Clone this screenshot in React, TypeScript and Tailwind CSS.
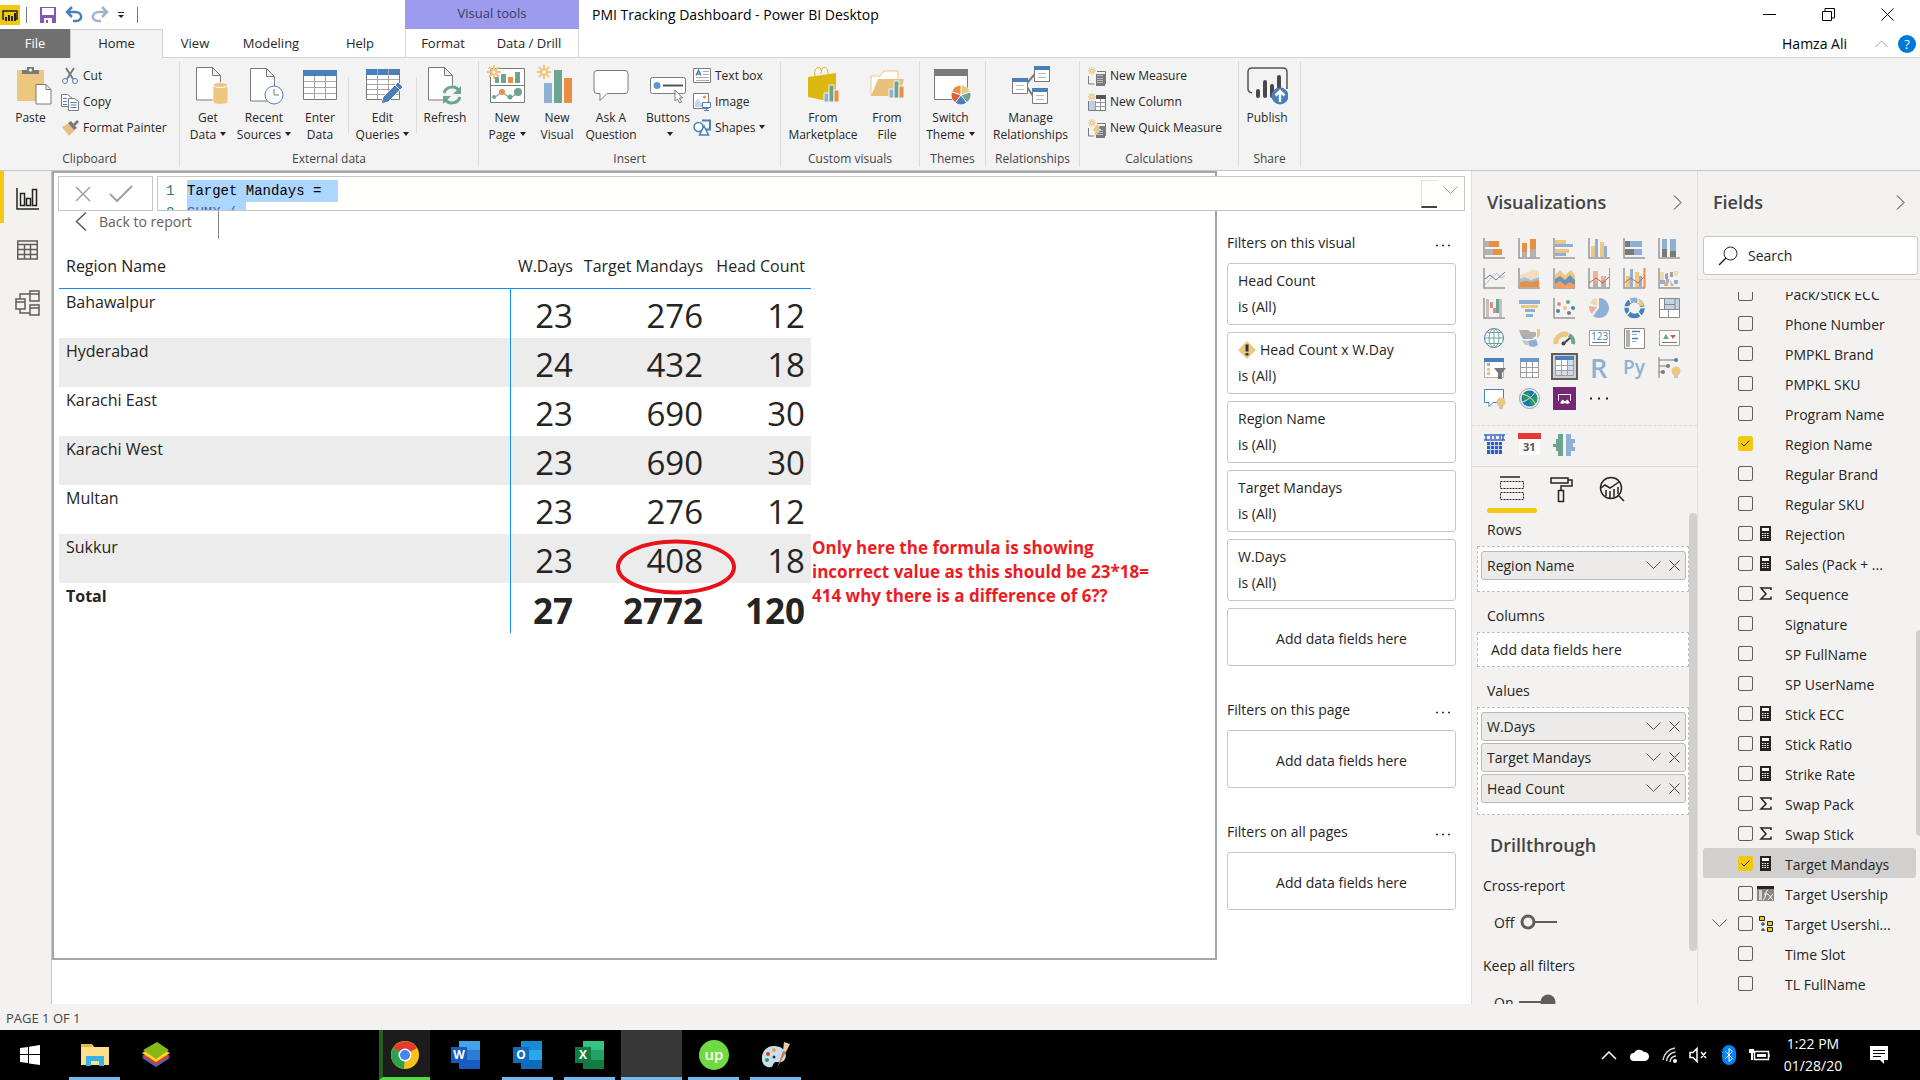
import { useState, type ReactNode } from 'react';

const GRAY = '#7a7a7a';
const BLUE = '#4a80ba';
const LIGHT = '#8eb0d5';
const GREEN = '#6ba491';
const ORANGE = '#e88e45';
const TAN = '#edc67f';

interface SvgProps {
  w: number;
  h: number;
  children: ReactNode;
}

function Svg({ w, h, children }: SvgProps) {
  return (
    <svg width={w} height={h} viewBox={`0 0 ${w} ${h}`} fill="none" className="shrink-0" aria-hidden="true">
      {children}
    </svg>
  );
}

/* ---------- Ribbon icons (42x42) ---------- */

function Spark({ x = 0, s = 1 }: { x?: number; s?: number }) {
  return (
    <g transform={`translate(${x} 0) scale(${s})`} stroke={TAN} strokeWidth="2">
      <path d="M7 0v4M7 10v4M0 7h4M10 7h4M2 2l3 3M9 9l3 3M12 2L9 5M5 9l-3 3" />
      <circle cx="7" cy="7" r="2.5" fill="#fff" />
    </g>
  );
}

const bigIcons: Record<string, ReactNode> = {
  paste: (
    <>
      <path d="M7 5h27v31H7z" fill={TAN} />
      <path d="M12 9V5h5V2h7v3h5v4z" fill={GRAY} />
      <circle cx="20.5" cy="5" r="1.5" fill="#fff" />
      <path d="M26 19.5h10l5 5V39H26zM36 19.5v5h5" fill="#fff" stroke={GRAY} />
    </>
  ),
  getData: (
    <>
      <path d="M9.5 2.5h16l8 8V35h-24zM25.5 2.5v8h8" fill="#fff" stroke={GRAY} />
      <path d="M26 20h15v17c0 3-15 3-15 0z" fill={TAN} stroke="#f3f3f3" />
      <ellipse cx="33.5" cy="20" rx="7.5" ry="2.5" fill={TAN} stroke="#fff" />
    </>
  ),
  recent: (
    <>
      <path d="M7.5 3.5h16l8 8V36h-24zM23.5 3.5v8h8" fill="#fff" stroke={GRAY} />
      <circle cx="31" cy="30" r="9" fill="#fff" stroke={BLUE} />
      <path d="M31 24v6h5" stroke={GRAY} />
    </>
  ),
  enter: (
    <>
      <path d="M4.5 5.5h33v29h-33z" fill="#fff" stroke={GRAY} />
      <path d="M4 5h34v6H4z" fill={BLUE} />
      <path d="M15.5 11v23M26.5 11v23M5 16.5h32M5 22.5h32M5 28.5h32" stroke="#a8a8a8" />
    </>
  ),
  edit: (
    <>
      <path d="M4.5 4.5h33v30h-33z" fill="#fff" stroke={GRAY} />
      <path d="M4 4h34v6H4z" fill={BLUE} />
      <path d="M15.5 4v30M26.5 4v30M5 14.5h32M5 19.5h32M5 24.5h32M5 29.5h32" stroke="#a8a8a8" />
      <path d="M19 39l2-7 15-15 5 5-15 15z" fill={BLUE} stroke="#f3f3f3" />
      <path d="M33 20l5 5" stroke="#fff" />
    </>
  ),
  refresh: (
    <>
      <path d="M4.5 2.5h16l8 8V35h-24zM20.5 2.5v8h8" fill="#fff" stroke={GRAY} />
      <circle cx="28" cy="30" r="10" fill="#f3f3f3" />
      <path d="M20 28c2-7 12-8 15-2M36 32c-2 7-12 8-15 2" stroke={GREEN} strokeWidth="3" />
      <path d="M37 21v8h-8zM19 39v-8h8z" fill={GREEN} />
    </>
  ),
  newPage: (
    <>
      <path d="M4.5 3.5h34v34h-34zM5 20.5h33" fill="#fff" stroke={GRAY} />
      <path d="M9 12h4v6H9zM15 9h5v9h-5zM29 7h5v11h-5z" fill={GREEN} />
      <path d="M22 12h5v6h-5z" fill={ORANGE} />
      <path d="M8 33l8-6 8 6 8-5" stroke={GRAY} />
      <circle cx="8" cy="32" r="2" fill={GREEN} />
      <circle cx="16" cy="27" r="3" fill={ORANGE} />
      <circle cx="24" cy="32" r="2.5" fill={GREEN} />
      <circle cx="32" cy="27" r="4" fill={GREEN} />
      <Spark x={1} />
    </>
  ),
  newVisual: (
    <>
      <path d="M8 18h8v20H8z" fill={LIGHT} />
      <path d="M18 5h8v33h-8z" fill={GREEN} />
      <path d="M28 13h8v25h-8z" fill={ORANGE} />
      <Spark x={1} />
    </>
  ),
  ask: <path d="M7 5.5h28q3 0 3 3v17q0 3-3 3H17l-7 7v-7H7q-3 0-3-3v-17q0-3 3-3z" fill="#fff" stroke={GRAY} />,
  buttons: (
    <>
      <rect x="3.5" y="12.5" width="35" height="16" rx="2" fill="#fff" stroke={GRAY} />
      <circle cx="10" cy="20.5" r="3.5" fill="#5b9bd5" />
      <path d="M16 20.5h20" stroke="#555" strokeWidth="2" />
      <path d="M28 25v11l2.500-2 2 4 2-1-2-4h3z" fill="#fff" stroke={GRAY} />
    </>
  ),
  market: (
    <>
      <path d="M13 11c-2-10 6-10 6-6M19 9c0-9 7-9 7 0" stroke="#dcb811" />
      <path d="M6 12l28-4v26l-9 2-19-4z" fill="#dcb811" />
      <path d="M22 28h5v9h-5z" fill={LIGHT} stroke="#f3f3f3" />
      <path d="M27 20h5v17h-5z" fill={GREEN} stroke="#f3f3f3" />
      <path d="M32 25h5v12h-5z" fill={ORANGE} stroke="#f3f3f3" />
    </>
  ),
  fromFile: (
    <>
      <path d="M5 30V11h9l4-5h14v25z" fill="#fff" stroke={TAN} />
      <path d="M12 14h26l-5 17H5z" fill="#e9c07c" />
      <path d="M23 24h5v9h-5z" fill={LIGHT} stroke="#f3f3f3" />
      <path d="M28 16h5v17h-5z" fill={GREEN} stroke="#f3f3f3" />
      <path d="M33 21h5v12h-5z" fill={ORANGE} stroke="#f3f3f3" />
    </>
  ),
  theme: (
    <>
      <path d="M4.5 4.5h33v30h-33z" fill="#fff" stroke={GRAY} />
      <path d="M4 4h34v7H4z" fill={GRAY} />
      <circle cx="31" cy="30" r="10" fill="#fff" />
      <path d="M31 30V20.5a9.5 9.5 0 0 1 9 6.500z" fill={TAN} />
      <path d="M31 30l9-3a9.5 9.5 0 0 1-3.500 10.500z" fill={GREEN} />
      <path d="M31 30l5.500 7.500a9.5 9.5 0 0 1-11 0z" fill={BLUE} />
      <path d="M31 30l-5.500 7.500A9.5 9.5 0 0 1 22 27z" fill="#d9603f" />
      <path d="M31 30l-9-3a9.5 9.5 0 0 1 9-6.500z" fill={ORANGE} />
      <path d="M31 30V20M31 30l9-3M31 30l6 8M31 30l-6 8M31 30l-9-3" stroke="#fff" />
    </>
  ),
  manage: (
    <>
      <path d="M17 18L25 9M17 22l6 9" stroke={GRAY} strokeWidth="2" />
      <path d="M2.5 15.5h15v13h-15zM24.5 3.5h15v13h-15zM22.5 25.5h15v13h-15z" fill="#fff" stroke={GRAY} />
      <path d="M2 13h16v4H2zM24 1h16v4H24zM22 23h16v4H22z" fill={BLUE} />
      <path d="M6 20.5h8M6 24.5h8M28 8.5h8M28 12.5h8M26 30.5h8M26 34.5h8" stroke="#bbb" />
    </>
  ),
  publish: (
    <>
      <path d="M6 28q-4-1-4-4V7q0-4 4-4h31q4 0 4 4v17" fill="#f3f3f3" stroke="#555" strokeWidth="1.5" />
      <path d="M12 26v5M19 17v14M26 21v10M33 12v14" stroke="#484848" strokeWidth="4" strokeLinecap="round" />
      <circle cx="34" cy="31" r="8.5" fill={BLUE} />
      <path d="M34 37V26M29.5 30.5L34 26l4.500 4.500" stroke="#fff" strokeWidth="2.5" />
    </>
  ),
};

/* ---------- Ribbon icons (18x19) ---------- */

const smallIcons: Record<string, ReactNode> = {
  cut: (
    <>
      <path d="M5 1l7 11M13 1L6 12" stroke={GRAY} strokeWidth="2" />
      <circle cx="4" cy="14" r="2.5" stroke={BLUE} />
      <circle cx="14" cy="14" r="2.5" stroke={BLUE} />
    </>
  ),
  copy: (
    <>
      <path d="M.5 1.5h6l4 3v9H.5z" fill="#fff" stroke={GRAY} />
      <path d="M7.5 5.5h6l4 3v9h-10z" fill="#fff" stroke={GRAY} />
      <path d="M2 5.5h4M2 8.5h4M2 11.5h4M9.5 9.5h6M9.5 12h6M9.5 14.5h6" stroke={BLUE} />
    </>
  ),
  painter: (
    <>
      <path d="M1 8l7-4 6 7-6 6z" fill="#e9bd83" />
      <path d="M7 4l3-2 6 7-3 2z" fill={GRAY} />
      <path d="M12 5l4-4 2 2-4 4z" fill={GRAY} />
    </>
  ),
  textBox: (
    <>
      <path d="M.5 1.5h17v14H.5z" fill="#fff" stroke={GRAY} />
      <path d="M3 8.5l2.500-5 2.500 5M4 7h3" stroke={BLUE} strokeWidth="1.5" />
      <path d="M10 4.5h6M10 7.5h6M3 10.5h13M3 13.5h13" stroke="#aaa" />
    </>
  ),
  image: (
    <>
      <path d="M.5 .5h15v15H.5z" fill="#fff" stroke={GRAY} />
      <path d="M2 14V9l3-3 4 5v3z" fill="#c3d5e9" />
      <circle cx="11.5" cy="4" r="1.5" fill={ORANGE} />
      <path d="M9.5 9.5h8v5h-8zM13.5 14v3M11 17.5h5" fill="#fff" stroke={BLUE} />
    </>
  ),
  shapes: (
    <>
      <path d="M9 1.5h8v9h-6" stroke={BLUE} strokeWidth="2" />
      <circle cx="5.5" cy="8" r="4.5" fill="#fff" stroke={BLUE} strokeWidth="1.5" />
      <path d="M11 7l4.500 9h-9z" fill="#fff" stroke={BLUE} strokeWidth="1.5" />
    </>
  ),
  measure: (
    <>
      <path d="M.5 9v8h6M9 4.5h8.500V17" stroke={GRAY} />
      <path d="M8 7h9v12H8z" fill={GRAY} />
      <path d="M9.5 8.5h6M9.5 11.5h6M9.5 13.5h6M9.5 15.5h6" stroke="#fff" strokeDasharray="1 1" />
      <Spark s={0.55} />
    </>
  ),
  column: (
    <>
      <path d="M.5 2.5h17v15H.5z" fill="#fff" stroke={GRAY} />
      <path d="M8 2h10v4H8z" fill="#555" />
      <path d="M1 8h6v9H1z" fill="#bcd0e8" />
      <path d="M7.5 6v11M12.5 6v11M7 9.5h10M7 13.5h10" stroke="#999" />
      <path d="M0 0h8v8H0z" fill="#f3f3f3" />
      <Spark s={0.55} />
    </>
  ),
  quick: (
    <>
      <path d="M.5 9v8h6M9 4.5h8.500V17" stroke={GRAY} />
      <path d="M8 7h9v12H8z" fill={GRAY} />
      <path d="M9.5 11.5h6M9.5 13.5h6M9.5 15.5h6" stroke="#fff" strokeDasharray="1 1" />
      <path d="M8 6h4l-2 4h3l-7 8 1-6H4z" fill={TAN} stroke="#f3f3f3" strokeWidth=".5" />
      <Spark s={0.55} />
    </>
  ),
};

/* ---------- Visualization gallery icons (23x23) ---------- */

const axis = <path d="M1 1v20h21" stroke="#9a9896" strokeWidth="1.5" />;

const vizIcons: { name: string; icon: ReactNode; selected?: boolean }[] = [
  { name: 'Stacked bar chart', icon: <>{axis}<path d="M2 4h4v6H2zM2 12h8v6H2z" fill="#b3b0ad" /><path d="M6 4h10v6H6zM10 12h9v6h-9z" fill={ORANGE} /></> },
  { name: 'Stacked column chart', icon: <>{axis}<path d="M4 15h5v5H4zM12 12h6v8h-6z" fill="#b3b0ad" /><path d="M4 6h5v9H4zM12 2h6v10h-6z" fill={ORANGE} /></> },
  { name: 'Clustered bar chart', icon: <>{axis}<path d="M2 3h11v4H2zM2 12h14v4H2z" fill={TAN} /><path d="M2 7h18v3H2zM2 16h11v3H2z" fill={LIGHT} /></> },
  { name: 'Clustered column chart', icon: <>{axis}<path d="M3 9h4v11H3zM12 5h4v15h-4z" fill={TAN} /><path d="M7 2h3v18H7zM16 9h3v11h-3z" fill={LIGHT} /></> },
  { name: '100% stacked bar chart', icon: <>{axis}<path d="M2 4h5v6H2zM2 12h9v6H2z" fill="#7a7a7a" /><path d="M7 4h12v6H7zM11 12h8v6h-8z" fill={LIGHT} /></> },
  { name: '100% stacked column chart', icon: <>{axis}<path d="M4 12h5v8H4zM12 14h6v6h-6z" fill="#7a7a7a" /><path d="M4 2h5v10H4zM12 2h6v12h-6z" fill={LIGHT} /></> },
  { name: 'Line chart', icon: <>{axis}<path d="M2 18l6-7 6-5 4 5 4-2" stroke="#eda79a" /><path d="M2 12l5-4 6 5 9-8" stroke={BLUE} /></> },
  { name: 'Area chart', icon: <>{axis}<path d="M2 8l6-2 7-4 6 3v6l-8 2-5-2-6 2z" fill="#f3dfc0" /><path d="M2 12l5-2 6 3 8-3v5H2z" fill="#a0c5db" /><path d="M2 15l6-1 6 1 7-2v7H2z" fill={ORANGE} /></> },
  { name: 'Stacked area chart', icon: <>{axis}<path d="M2 8l5-5 5 5 6-5 4 5v10H2z" fill={TAN} /><path d="M2 12l5-3 5 4 5-5 5 5v6H2z" fill="#6b93b5" /><path d="M2 17l5-3 5 4 5-3 5 3v3H2z" fill="#ee9f62" /></> },
  { name: 'Line and stacked column chart', icon: <>{axis}<path d="M5 4h5v10H5zM13 9h5v6h-5z" fill="#efb48d" /><path d="M5 14h5v6H5zM13 13h5v7h-5z" fill="#b3b0ad" /><path d="M1 16l7-5 7 5 6-6" stroke="#d9603f" /><path d="M21.5 1v20" stroke={ORANGE} /></> },
  { name: 'Line and clustered column chart', icon: <>{axis}<path d="M3 9h4v11H3zM12 5h4v15h-4z" fill={TAN} /><path d="M7 2h3v18H7zM16 9h3v11h-3z" fill={LIGHT} /><path d="M1 16l7-5 7 5 6-6" stroke="#d9603f" /><path d="M21.5 1v20" stroke={ORANGE} strokeWidth="2" /></> },
  { name: 'Ribbon chart', icon: <>{axis}<path d="M2 5h4v8H2zM16 4h4v5h-4z" fill="#f3d9ae" /><path d="M7 7l3-1v6H7zM12 5h3v5h-3z" fill="#a3a19f" /><path d="M2 13h5v4H2zM8 12h3v4H8zM16 13h4v4h-4z" fill={LIGHT} /><path d="M7 15l3-1v5H6zM12 13l4 6h-3z" fill="#efa46d" /></> },
  { name: 'Waterfall chart', icon: <>{axis}<path d="M3 2h3v18H3zM16 2h3v18h-3z" fill="#c4c2c0" /><path d="M7 5h3v6h3v5h-3v-5H7z" fill="#e58d7d" /><path d="M13 2h3v14h-3z" fill={GREEN} /></> },
  { name: 'Funnel', icon: <><path d="M1 3h21v4H1zM7 12h10v3H7zM8 17h7v3H8z" fill={LIGHT} /><path d="M3 8h17v3H3z" fill={TAN} /></> },
  { name: 'Scatter chart', icon: <>{axis}<circle cx="6" cy="7" r="2" fill="#e58d7d" /><circle cx="15" cy="5" r="2" fill={GREEN} /><circle cx="5" cy="14" r="2" fill={BLUE} /><circle cx="12" cy="11" r="2" fill={TAN} /><circle cx="20" cy="11" r="2" fill={BLUE} /><circle cx="16" cy="16" r="2" fill={GRAY} /></> },
  { name: 'Pie chart', icon: <><path d="M11 1a10 10 0 1 1-6 18l6-8z" fill={LIGHT} /><path d="M9 10L4 17a10 10 0 0 1-3-8z" fill="#edb1a4" /><path d="M9 9L2 6q2-4 7-5z" fill="#f0d9b0" /></> },
  { name: 'Donut chart', icon: <><circle cx="11.5" cy="11" r="8" stroke={BLUE} strokeWidth="4.5" /><path d="M8 4a8 8 0 0 1 6-1" stroke={LIGHT} strokeWidth="4.5" /><path d="M15 4a8 8 0 0 1 4 5" stroke={TAN} strokeWidth="4.5" /><path d="M6 1l2 5M15 0v6M17 11l6-1M0 10h6M7 14l-4 5M15 15l4 5" stroke="#f3f2f1" strokeWidth="1.5" /></> },
  { name: 'Treemap', icon: <><path d="M1.5 1.5h20v19h-20z" fill="#fff" /><path d="M7 2h14v10H7z" fill="#bfd2e6" /><path d="M1.5 1.5h20v19h-20zM1 12.5h21M6.5 2v10M10.5 13v7M17 2v10M7 7.5h10" stroke="#8a8886" /></> },
  { name: 'Map', icon: <><circle cx="11" cy="11" r="9.5" fill="#fff" stroke={BLUE} /><ellipse cx="11" cy="11" rx="5" ry="9.5" stroke={GREEN} /><path d="M2 11h18M11 1v20M4 5.5h14M4 16.5h14" stroke={GREEN} /></> },
  { name: 'Filled map', icon: <><path d="M1 3h9l3 2h5v4l-4 3H8L3 9z" fill="#b3b0ad" /><path d="M3 8h5v4H5zM10 14l8-2 2 6-4 2-5-1z" fill={LIGHT} /><path d="M4 13l6 1v4H7z" fill="#c8c6c4" /><path d="M19 2h3v6l-3 4z" fill={TAN} /></> },
  { name: 'Gauge', icon: <><path d="M3 17a8.5 8.5 0 0 1 12-9" stroke={TAN} strokeWidth="5" /><path d="M16 8a8.5 8.5 0 0 1 4 9" stroke={GREEN} strokeWidth="4" /><path d="M10 17l7-6" stroke="#444" strokeWidth="2" /><circle cx="10.5" cy="16.5" r="2" fill="#444" /></> },
  { name: 'Card', icon: <><path d="M1.5 3.5h20v15h-20z" fill="#fff" stroke="#a19f9d" /><text x="3" y="12.5" fontSize="10" fill={BLUE} fontFamily="Open Sans, sans-serif">123</text><path d="M4 15.5h15" stroke="#777" /></> },
  { name: 'Multi-row card', icon: <><path d="M1.5 1.5h20v20h-20z" fill="#fff" stroke="#8a8886" /><path d="M3 3h4v17H3z" fill="#b3b0ad" /><path d="M9 4.5h8M9 11.5h6" stroke={BLUE} strokeWidth="1.5" /><path d="M9 7.5h5M9 14.5h4" stroke="#aaa" /></> },
  { name: 'KPI', icon: <><path d="M1.5 3.5h20v15h-20z" fill="#fff" stroke="#a19f9d" /><path d="M5 12l3-5 3 5z" fill={GREEN} /><path d="M12 8h6l-3 4z" fill="#d9603f" /><path d="M4 15.5h15" stroke="#777" /></> },
  { name: 'Slicer', icon: <><path d="M1.5 2.5h19v18h-19z" fill="#fff" stroke="#b3b0ad" /><path d="M1 1h20v4H1z" fill={BLUE} /><path d="M4 6h3v3H4z" fill={LIGHT} /><path d="M4 11h3v3H4z" fill={TAN} /><path d="M4 15h3v3H4z" fill="#edb1a4" /><path d="M11 11h12l-4 5v6h-4v-6z" fill="#777" /></> },
  { name: 'Table', icon: <><path d="M2.5 2.5h18v18h-18zM8.5 4v16M14.5 4v16M3 10.5h17M3 15.5h17" fill="#fff" stroke="#a19f9d" /><path d="M2 1h19v4H2z" fill="#6c96c5" /></> },
  { name: 'Matrix', selected: true, icon: <><path d="M2.5 2.5h18v18h-18z" fill="#fff" /><path d="M14 5h6v15H3v-5h11z" fill="#d0deed" /><path d="M2.5 2.5h18v18h-18zM8.5 4v16M14.5 4v16M3 10.5h17M3 15.5h17" stroke="#a19f9d" /><path d="M2 1h19v4H2z" fill={BLUE} /></> },
  { name: 'R script visual', icon: <text x="2" y="21" fontSize="27" fontWeight="600" fill={LIGHT} fontFamily="Open Sans, sans-serif">R</text> },
  { name: 'Python visual', icon: <text x="0" y="17" fontSize="19" fontWeight="600" fill={LIGHT} fontFamily="Open Sans, sans-serif">Py</text> },
  { name: 'Key influencers', icon: <><path d="M1 0v21M1 3h17M1 9h9M1 15h5" stroke={GRAY} /><circle cx="18" cy="3" r="2" fill={BLUE} /><circle cx="10" cy="9" r="2" fill={GRAY} /><circle cx="5" cy="15" r="2" fill={GRAY} /><circle cx="18" cy="14" r="4.5" fill={TAN} /><path d="M16 18h4v3h-4z" fill="#c8c6c4" /></> },
  { name: 'Q&A', icon: <><path d="M1.5 2.5h19v13H10l-4 4v-4H1.5z" fill="#fff" stroke={BLUE} /><circle cx="18" cy="15" r="4.5" fill={TAN} /><path d="M16 19h4v3h-4z" fill="#c8c6c4" /></> },
  { name: 'ArcGIS map', icon: <><circle cx="11.5" cy="11.5" r="10" fill="#e8f1ea" stroke="#a19f9d" /><circle cx="11.5" cy="11.5" r="8" fill="#1676c0" /><path d="M4 10l5-5 4 2-3 5-4 2zM13 12l5-4 1 5-4 5-4-1z" fill="#2f9e49" /><path d="M4 7c6 1 11 5 14 11M4 15C9 14 15 9 17 5" stroke="#e8f1ea" /></> },
  { name: 'PowerApps', icon: <><path d="M0 0h23v23H0z" fill="#742774" /><path d="M5.5 14V7.5h12V14" stroke="#fff" /><path d="M7 16l2.500-3.500 2.500 2 2.500-2L17 16l-2.500 1-2.500-1-2.500 1z" fill="#fff" /></> },
];

const customVizIcons: { name: string; icon: ReactNode }[] = [
  { name: 'Calendar table', icon: <><path d="M1 2h21M1 7h21M3 2v5M8 3v3M12 3v3M17 3v3M20 2v5" stroke="#3a66c8" strokeWidth="1.5" /><path d="M4 9h15v12H4z" fill="#2e5fc5" /><path d="M4 12.5h15M4 16.5h15M7.5 9v12M11.5 9v12M15.5 9v12" stroke="#c8d5f0" /></> },
  { name: 'Calendar by date', icon: <><path d="M1 1h21v21H1z" fill="#fbfbfb" /><path d="M0 0h23v6H0z" fill="#e53935" /><text x="5" y="18" fontSize="11" fontWeight="700" fill="#555" fontFamily="Open Sans, sans-serif">31</text></> },
  { name: 'Tornado chart', icon: <><path d="M5 1h5v22H5v-5H3v-4H0v-3h3V6h2z" fill={GREEN} /><path d="M13 1h5v5h4v4h-2v4h2v4h-4v5h-5z" fill={LIGHT} /></> },
];

/* ---------- Ribbon ---------- */

interface BigButtonProps {
  icon: string;
  lines: string[];
  menu?: boolean;
  className: string;
}

function Caret() {
  return (
    <svg width="6" height="4" viewBox="0 0 6 4" className="inline-block ml-1 mb-1" aria-hidden="true">
      <path d="M0 0h6L3 4z" fill="#222" />
    </svg>
  );
}

function BigButton({ icon, lines, menu, className }: BigButtonProps) {
  return (
    <button type="button" className={`flex flex-col items-center shrink-0 pt-1 ${className}`}>
      <Svg w={42} h={42}>{bigIcons[icon]}</Svg>
      <span className="flex flex-col items-center leading-[17px] pt-0.5 whitespace-nowrap">
        {lines.map((line, i) => (
          <span key={line} className="h-[17px]">
            {line}
            {menu && i === lines.length - 1 && <Caret />}
          </span>
        ))}
      </span>
    </button>
  );
}

function SmallButton({ icon, label, menu }: { icon: string; label: string; menu?: boolean }) {
  return (
    <button type="button" className="flex items-center gap-1 h-[26px] whitespace-nowrap">
      <Svg w={18} h={19}>{smallIcons[icon]}</Svg>
      <span>{label}{menu && <Caret />}</span>
    </button>
  );
}

function Group({ label, className, children }: { label: string; className: string; children: ReactNode }) {
  return (
    <section className={`flex flex-col shrink-0 border-r border-[#dcdcdc] my-[3px] ${className}`}>
      <div className="flex h-[90px]">{children}</div>
      <h2 className="text-center text-[#444] leading-4">{label}</h2>
    </section>
  );
}

function Ribbon() {
  return (
    <div className="flex h-[113px] bg-[#f3f3f3] border-b border-[#c8c6c4] text-[12px] text-[#262626]">
      <Group label="Clipboard" className="w-[180px]">
        <BigButton icon="paste" lines={['Paste']} className="w-[61px]" />
        <div className="pt-0.5">
          <SmallButton icon="cut" label="Cut" />
          <SmallButton icon="copy" label="Copy" />
          <SmallButton icon="painter" label="Format Painter" />
        </div>
      </Group>
      <Group label="External data" className="w-[299px]">
        <BigButton icon="getData" lines={['Get', 'Data']} menu className="w-14" />
        <BigButton icon="recent" lines={['Recent', 'Sources']} menu className="w-14" />
        <BigButton icon="enter" lines={['Enter', 'Data']} className="w-14" />
        <div className="w-px h-14 mt-4 bg-[#dcdcdc]" />
        <BigButton icon="edit" lines={['Edit', 'Queries']} menu className="w-[67px]" />
        <div className="w-px h-14 mt-4 bg-[#dcdcdc]" />
        <BigButton icon="refresh" lines={['Refresh']} className="w-14" />
      </Group>
      <Group label="Insert" className="w-[302px]">
        <BigButton icon="newPage" lines={['New', 'Page']} menu className="w-14" />
        <BigButton icon="newVisual" lines={['New', 'Visual']} className="w-11" />
        <BigButton icon="ask" lines={['Ask A', 'Question']} className="w-16" />
        <BigButton icon="buttons" lines={['Buttons', '']} menu className="w-[50px]" />
        <div className="pt-0.5">
          <SmallButton icon="textBox" label="Text box" />
          <SmallButton icon="image" label="Image" />
          <SmallButton icon="shapes" label="Shapes" menu />
        </div>
      </Group>
      <Group label="Custom visuals" className="w-[139px]">
        <BigButton icon="market" lines={['From', 'Marketplace']} className="w-[84px]" />
        <BigButton icon="fromFile" lines={['From', 'File']} className="w-11" />
      </Group>
      <Group label="Themes" className="w-[66px]">
        <BigButton icon="theme" lines={['Switch', 'Theme']} menu className="w-[61px]" />
      </Group>
      <Group label="Relationships" className="w-[94px]">
        <BigButton icon="manage" lines={['Manage', 'Relationships']} className="w-[89px]" />
      </Group>
      <Group label="Calculations" className="w-[159px]">
        <div className="pt-0.5 pl-2">
          <SmallButton icon="measure" label="New Measure" />
          <SmallButton icon="column" label="New Column" />
          <SmallButton icon="quick" label="New Quick Measure" />
        </div>
      </Group>
      <Group label="Share" className="w-[62px]">
        <BigButton icon="publish" lines={['Publish']} className="w-14" />
      </Group>
    </div>
  );
}

function TitleBar() {
  return (
    <header className="flex h-[29px] shrink-0 items-center bg-white">
      <div className="flex items-center w-[405px] gap-2 pt-px">
        <Svg w={20} h={20}>
          <path d="M0 0h20v20H0z" fill="#f2c811" />
          <path d="M4 14H3V6h14v8h-1" stroke="#222" strokeWidth="1.5" />
          <path d="M6 12v4M9 10v6M12 11v5M15 8v8" stroke="#222" strokeWidth="2" />
        </Svg>
        <div className="w-px h-4 -ml-0.5 bg-[#777]" />
        <button type="button" aria-label="Save" className="ml-1">
          <Svg w={18} h={18}>
            <path d="M1 1h16v16H1z" fill="#8656b0" />
            <path d="M3 2h12v7H3zM5 12h8v5H5z" fill="#fff" />
            <path d="M7 14h2v3H7z" fill="#8656b0" />
          </Svg>
        </button>
        <button type="button" aria-label="Undo">
          <Svg w={18} h={18}>
            <path d="M2 6h8c8 0 8 9 1 9H8M7 1L2 6l5 5" stroke="#4a80ba" strokeWidth="2.5" />
          </Svg>
        </button>
        <button type="button" aria-label="Redo">
          <Svg w={18} h={18}>
            <path d="M16 6H8c-8 0-8 9-1 9h3M11 1l5 5-5 5" stroke="#a3b3cc" strokeWidth="2.5" />
          </Svg>
        </button>
        <button type="button" aria-label="Customize toolbar">
          <Svg w={8} h={10}>
            <path d="M1 2.5h6" stroke="#222" />
            <path d="M1 5h6L4 8z" fill="#222" />
          </Svg>
        </button>
        <div className="w-px h-4 ml-1 bg-[#777]" />
      </div>
      <div className="w-[174px] h-full bg-[#9c9bed] text-center text-[13px] leading-[27px] text-[#3a3a5a]">
        Visual tools
      </div>
      <h1 className="ml-[13px] text-[14px]">PMI Tracking Dashboard - Power BI Desktop</h1>
      <div className="flex items-center ml-auto mr-[26px] gap-[46px]">
        <button type="button" aria-label="Minimize"><Svg w={13} h={13}><path d="M0 6.5h13" stroke="#000" /></Svg></button>
        <button type="button" aria-label="Restore">
          <Svg w={13} h={13}><path d="M.5 3.5h9v9h-9zM3 3V.5h9.500V10H10" stroke="#000" /></Svg>
        </button>
        <button type="button" aria-label="Close"><Svg w={13} h={13}><path d="M.5 .5l12 12M12.5 .5l-12 12" stroke="#000" /></Svg></button>
      </div>
    </header>
  );
}

function TabRow() {
  return (
    <nav className="flex h-[29px] shrink-0 bg-white text-[13px] text-[#262626]">
      <button type="button" className="w-[70px] bg-[#707070] text-white">File</button>
      <button type="button" className="w-[93px] -mb-px pb-0.5 border border-b-0 border-[#d0d0d0] bg-[#f3f3f3]">Home</button>
      <div className="flex flex-1 pt-px border-b border-[#d0d0d0]">
        <button type="button" className="w-[64px]">View</button>
        <button type="button" className="w-[88px]">Modeling</button>
        <button type="button" className="w-[90px]">Help</button>
        <div className="flex w-[174px] border-x border-[#d8d8d8]">
          <button type="button" className="w-[74px]">Format</button>
          <button type="button" className="flex-1">Data / Drill</button>
        </div>
        <div className="flex items-center ml-auto mr-1">
          <span className="text-[14px] text-black">Hamza Ali</span>
          <button type="button" aria-label="Collapse ribbon" className="ml-7 mr-2.5">
            <Svg w={13} h={8}><path d="M.5 7l6-6 6 6" stroke="#999" /></Svg>
          </button>
          <button type="button" aria-label="Help" className="size-[18px] rounded-full bg-[#0078d7] text-white text-[13px] leading-[18px]">?</button>
        </div>
      </div>
    </nav>
  );
}

/* ---------- Left navigation ---------- */

function ViewNav() {
  return (
    <nav className="flex flex-col w-[52px] shrink-0 bg-[#f3f2f1] border-r border-[#c8c6c4]">
      <button type="button" aria-label="Report" className="flex items-center h-[52px] pt-1 pl-3 border-l-4 border-[#f2c811]">
        <Svg w={24} h={24}>
          <path d="M1 1v21h22M4.5 6.5h4v12h-4zM10.5 11.5h4v7h-4zM16.5 2.5h4v16h-4z" stroke="#252423" strokeWidth="1.5" />
        </Svg>
      </button>
      <button type="button" aria-label="Data" className="flex items-center h-[54px] pl-[17px]">
        <Svg w={21} h={20}>
          <path d="M.75 1h19.500v18H.75zM1 4.5h19M1 9.5h19M1 14.5h19M7.5 5v14M13.5 5v14" stroke="#605e5c" strokeWidth="1.5" />
        </Svg>
      </button>
      <button type="button" aria-label="Model" className="flex items-center h-[52px] pl-[15px]">
        <Svg w={25} h={26}>
          <path d="M1 9h9v10H1zM1 12h9M15 1h9v10h-9zM15 4h9M15 15h9v10h-9zM15 18h9M5 9V4h10M5 19v4h10" stroke="#605e5c" strokeWidth="1.5" />
        </Svg>
      </button>
    </nav>
  );
}

/* ---------- Report canvas ---------- */

const rows = [
  { region: 'Bahawalpur', days: 23, target: 276, head: 12 },
  { region: 'Hyderabad', days: 24, target: 432, head: 18 },
  { region: 'Karachi East', days: 23, target: 690, head: 30 },
  { region: 'Karachi West', days: 23, target: 690, head: 30 },
  { region: 'Multan', days: 23, target: 276, head: 12 },
  { region: 'Sukkur', days: 23, target: 408, head: 18 },
];

function FormulaBar() {
  return (
    <div className="absolute inset-x-[6px] top-[5px] flex h-[35px] gap-1 z-10">
      <div className="flex items-center w-[95px] pl-4 gap-[18px] border border-[#c8c6c4] bg-white">
        <button type="button" aria-label="Cancel"><Svg w={16} h={16}><path d="M1 1l14 14M15 1L1 15" stroke="#a0a0a0" strokeWidth="1.5" /></Svg></button>
        <button type="button" aria-label="Commit"><Svg w={24} h={18}><path d="M1 9l7 7L23 1" stroke="#a0a0a0" strokeWidth="2" /></Svg></button>
      </div>
      <div className="flex flex-1 border border-[#c8c6c4] bg-[#fffffe] overflow-hidden font-['Liberation_Mono',monospace] text-[14px] leading-[22px] pt-[3px]">
        <div className="w-[29px] pl-2 text-[#237893]">
          <div>1</div>
          <div>2</div>
        </div>
        <div role="textbox" aria-label="Formula" className="flex-1 whitespace-pre text-black">
          <div><span className="inline-block bg-[#add6ff]">{'Target Mandays =  '}</span></div>
          <div><span className="inline-block bg-[#add6ff] text-[#3a66c8]">{'SUMX ( '}</span></div>
        </div>
        <div className="w-4 h-7 border-l border-t border-b-2 border-[#e0e0e0] border-b-[#444]" />
        <button type="button" aria-label="Expand formula bar" className="flex pt-1.5 px-1.5">
          <Svg w={15} h={9}><path d="M.5 .5l7 7 7-7" stroke="#a0a0a0" /></Svg>
        </button>
      </div>
    </div>
  );
}

function MatrixVisual() {
  return (
    <div className="relative w-[752px] ml-[5px]">
      <table className="w-full table-fixed border-collapse text-[#252423]">
        <colgroup>
          <col className="w-[451px]" />
          <col className="w-[69px]" />
          <col className="w-[130px]" />
          <col />
        </colgroup>
        <thead>
          <tr className="h-[46px] border-b border-[#118dff] text-[16px]">
            <th className="pl-[7px] pt-0.5 text-left font-normal">Region Name</th>
            <th className="pr-1.5 pt-0.5 text-right font-normal">W.Days</th>
            <th className="pr-1.5 pt-0.5 text-right font-normal whitespace-nowrap">Target Mandays</th>
            <th className="pr-1.5 pt-0.5 text-right font-normal whitespace-nowrap">Head Count</th>
          </tr>
        </thead>
        <tbody className="text-[33px] leading-[45px]">
          {rows.map((row) => (
            <tr key={row.region} className="h-[49px] first:h-[50px] even:bg-[#ececec]">
              <th className="pl-[7px] pt-[3px] text-left align-top text-[16px] leading-5 font-normal border-r border-[#118dff]">{row.region}</th>
              <td className="pr-1.5 pt-1 text-right">{row.days}</td>
              <td className="pr-1.5 pt-1 text-right">{row.target}</td>
              <td className="pr-1.5 pt-1 text-right">{row.head}</td>
            </tr>
          ))}
        </tbody>
        <tfoot className="text-[35px] leading-[45px] font-bold">
          <tr className="h-[50px]">
            <th className="pl-[7px] pt-[3px] text-left align-top text-[16px] leading-5 border-r border-[#118dff]">Total</th>
            <td className="pr-1.5 pt-1 text-right">27</td>
            <td className="pr-1.5 pt-1 text-right">2772</td>
            <td className="pr-1.5 pt-1 text-right">120</td>
          </tr>
        </tfoot>
      </table>
      {/* Mark-up drawn over the Sukkur row */}
      <svg className="absolute left-[556px] top-[297px]" width="122" height="56" viewBox="0 0 122 56" fill="none" aria-hidden="true">
        <ellipse cx="61" cy="28" rx="58" ry="25.5" stroke="#e8121b" strokeWidth="4" />
      </svg>
      <p className="absolute left-[753px] top-[294px] w-[380px] text-[17px] leading-6 font-bold text-[#ed1c24]">
        Only here the formula is showing<br />
        incorrect value as this should be 23*18=<br />
        414 why there is a difference of 6??
      </p>
    </div>
  );
}

function Canvas() {
  return (
    <main className="flex-1 min-w-0 mb-11 border-2 border-[#a6a6a6] bg-white">
      <div className="flex h-[69px] pt-[35px]">
        <button type="button" className="flex items-center h-[31px] pb-1 pl-[21px] pr-[26px] gap-3 border-r border-[#8a8886] text-[14px] text-[#605e5c]">
          <Svg w={12} h={19}><path d="M11 .5L1.5 9.5l9.500 9" stroke="#605e5c" strokeWidth="1.5" /></Svg>
          Back to report
        </button>
      </div>
      <MatrixVisual />
    </main>
  );
}

/* ---------- Filters ---------- */

function FilterHeading({ children }: { children: ReactNode }) {
  return (
    <div className="flex items-center justify-between h-[42px] pr-1.5">
      <h2>{children}</h2>
      <button type="button" aria-label="More options" className="pt-1.5">
        <Svg w={14} h={3}><path d="M0 1.5h2M6 1.5h2M12 1.5h2" stroke="#333" strokeWidth="1.5" /></Svg>
      </button>
    </div>
  );
}

function FilterCard({ title, warn }: { title: string; warn?: boolean }) {
  return (
    <div className="h-[62px] pt-1 pl-2.5 border border-[#c8c6c4] rounded-[3px] bg-white leading-[26px]">
      <div className="flex items-center gap-1 whitespace-nowrap">
        {warn && (
          <Svg w={18} h={18}>
            <path d="M9 0l9 9-9 9-9-9z" fill={TAN} />
            <path d="M9 3.5v7M9 12v2.500" stroke="#333" strokeWidth="3" />
          </Svg>
        )}
        {title}
      </div>
      <div>is (All)</div>
    </div>
  );
}

function AddFields() {
  return (
    <div className="flex items-center justify-center h-[58px] pt-0.5 border border-[#c8c6c4] rounded-[3px] bg-white">
      Add data fields here
    </div>
  );
}

function FiltersPane() {
  return (
    <aside className="w-[254px] shrink-0 pt-[50px] pl-[10px] pr-[15px] bg-white text-[14px] text-[#252423]">
      <FilterHeading>Filters on this visual</FilterHeading>
      <div className="flex flex-col gap-[7px] mb-[22px]">
        <FilterCard title="Head Count" />
        <FilterCard title="Head Count x W.Day" warn />
        <FilterCard title="Region Name" />
        <FilterCard title="Target Mandays" />
        <FilterCard title="W.Days" />
        <AddFields />
      </div>
      <FilterHeading>Filters on this page</FilterHeading>
      <div className="mb-[22px]"><AddFields /></div>
      <FilterHeading>Filters on all pages</FilterHeading>
      <AddFields />
    </aside>
  );
}

/* ---------- Visualizations ---------- */

function PaneHeader({ title }: { title: string }) {
  return (
    <div className="flex items-center justify-between h-[62px] px-[15px]">
      <h2 className="text-[18px] font-semibold text-[#444]">{title}</h2>
      <button type="button" aria-label={`Collapse ${title}`}>
        <Svg w={9} h={15}><path d="M1 .5l7 7-7 7" stroke="#333" /></Svg>
      </button>
    </div>
  );
}

function FieldPill({ name }: { name: string }) {
  return (
    <div className="flex items-center h-[29px] px-[5px] border border-[#bab8b7] rounded-[3px] bg-[#edebe9]">
      <span className="flex-1">{name}</span>
      <button type="button" aria-label={`${name} options`} className="mr-2">
        <Svg w={15} h={9}><path d="M.5 .5l7 7 7-7" stroke="#555" /></Svg>
      </button>
      <button type="button" aria-label={`Remove ${name}`}>
        <Svg w={11} h={11}><path d="M.5 .5l10 10M10.5 .5l-10 10" stroke="#444" /></Svg>
      </button>
    </div>
  );
}

function Well({ label, fields }: { label: string; fields: string[] }) {
  return (
    <div>
      <h3 className="h-8 pl-[15px] leading-8">{label}</h3>
      <div className="ml-[5px] mb-2 border border-dashed border-[#c0bebc] bg-white">
        {fields.length > 0 ? (
          <div className="flex flex-col gap-0.5 pt-1 pb-[11px] pl-[3px] pr-0.5">
            {fields.map((f) => <FieldPill key={f} name={f} />)}
          </div>
        ) : (
          <div className="h-[33px] pl-[13px] leading-[33px]">Add data fields here</div>
        )}
      </div>
    </div>
  );
}

function Toggle({ label, on, onChange }: { label: string; on: boolean; onChange: (on: boolean) => void }) {
  return (
    <div className="pl-[11px]">
      <div className="h-7 leading-7">{label}</div>
      <label className="flex items-center h-[52px] pb-2 pl-[11px] gap-1.5">
        {on ? 'On' : 'Off'}
        <input type="checkbox" role="switch" aria-label={label} checked={on} onChange={(e) => onChange(e.target.checked)} className="sr-only" />
        <Svg w={37} h={16}>
          <path d={on ? 'M0 8h24' : 'M14 8h23'} stroke="#605e5c" strokeWidth="2" />
          <circle cx={on ? 29 : 8} cy="8" r="6" fill={on ? '#605e5c' : '#f3f2f1'} stroke="#605e5c" strokeWidth="3" />
        </Svg>
      </label>
    </div>
  );
}

function VisualizationsPane() {
  const [crossReport, setCrossReport] = useState(false);
  const [keepFilters, setKeepFilters] = useState(true);

  return (
    <aside className="flex flex-col w-[226px] shrink-0 bg-[#f3f2f1] border-l border-[#e1dfdd] text-[14px] text-[#252423] overflow-hidden">
      <PaneHeader title="Visualizations" />
      <div className="grid grid-cols-[repeat(6,35px)] auto-rows-[30px] pl-[5px] pb-3">
        {vizIcons.map((v) => (
          <button
            key={v.name}
            type="button"
            aria-label={v.name}
            className={v.selected
              ? 'flex items-center justify-center w-[27px] h-[27px] ml-1 border-2 border-[#605e5c] bg-[#d2d0ce]'
              : 'flex items-center pl-1.5'}
          >
            <Svg w={23} h={23}>{v.icon}</Svg>
          </button>
        ))}
        <button type="button" aria-label="Import visual" className="flex items-center pl-2">
          <Svg w={19} h={3}><path d="M0 1.5h2M8 1.5h2M16 1.5h2" stroke="#222" strokeWidth="2" /></Svg>
        </button>
      </div>
      <div className="flex gap-3 h-[41px] shrink-0 items-center pb-1 pl-[11px] border-t border-dashed border-[#dcdad8]">
        {customVizIcons.map((v) => (
          <button key={v.name} type="button" aria-label={v.name}><Svg w={23} h={23}>{v.icon}</Svg></button>
        ))}
      </div>
      <div className="flex h-[47px] shrink-0 pl-[15px] border-t border-[#dcdad8]">
        <button type="button" aria-label="Fields" className="flex flex-col items-center justify-between w-[50px] pt-2">
          <Svg w={26} h={26}>
            <path d="M1 2h20" stroke="#252423" strokeWidth="1.5" />
            <path d="M1.5 6.5h23v7h-23zM1.5 17.5h23v7h-23z" stroke="#252423" strokeDasharray="2 1" />
          </Svg>
          <span className="w-full h-[5px] rounded-full bg-[#f2c811]" />
        </button>
        <button type="button" aria-label="Format" className="w-[50px] pl-3">
          <Svg w={25} h={28}>
            <path d="M2 2h17v5H2zM19 4h4v6H12v4M9.5 14.5h5v11h-5z" stroke="#252423" strokeWidth="1.5" />
          </Svg>
        </button>
        <button type="button" aria-label="Analytics" className="w-[50px] pl-3">
          <Svg w={26} h={28}>
            <circle cx="12" cy="12" r="10.5" stroke="#252423" strokeWidth="1.5" />
            <path d="M2 12l4-3 5 3 9-6M7 14v6M11 15v7M15 13v8M19 11v7M19 19l6 6" stroke="#252423" strokeWidth="1.5" />
          </Svg>
        </button>
      </div>
      <div className="flex flex-1 min-h-0">
        <div className="flex-1 min-w-0 pt-px overflow-hidden">
          <Well label="Rows" fields={['Region Name']} />
          <Well label="Columns" fields={[]} />
          <Well label="Values" fields={['W.Days', 'Target Mandays', 'Head Count']} />
          <h2 className="h-[49px] pl-[18px] text-[18px] leading-[44px] font-semibold text-[#444]">Drillthrough</h2>
          <Toggle label="Cross-report" on={crossReport} onChange={setCrossReport} />
          <Toggle label="Keep all filters" on={keepFilters} onChange={setKeepFilters} />
        </div>
        <div className="w-2 h-[438px] rounded-full bg-[#d2d0ce]" />
      </div>
    </aside>
  );
}

/* ---------- Fields ---------- */

type FieldKind = 'calc' | 'sum' | 'fx' | 'tree';

interface Field {
  name: string;
  kind?: FieldKind;
  expand?: boolean;
}

const fields: Field[] = [
  { name: 'Pack/Stick ECC' },
  { name: 'Phone Number' },
  { name: 'PMPKL Brand' },
  { name: 'PMPKL SKU' },
  { name: 'Program Name' },
  { name: 'Region Name' },
  { name: 'Regular Brand' },
  { name: 'Regular SKU' },
  { name: 'Rejection', kind: 'calc' },
  { name: 'Sales (Pack + ...', kind: 'calc' },
  { name: 'Sequence', kind: 'sum' },
  { name: 'Signature' },
  { name: 'SP FullName' },
  { name: 'SP UserName' },
  { name: 'Stick ECC', kind: 'calc' },
  { name: 'Stick Ratio', kind: 'calc' },
  { name: 'Strike Rate', kind: 'calc' },
  { name: 'Swap Pack', kind: 'sum' },
  { name: 'Swap Stick', kind: 'sum' },
  { name: 'Target Mandays', kind: 'calc' },
  { name: 'Target Usership', kind: 'fx' },
  { name: 'Target Usershi...', kind: 'tree', expand: true },
  { name: 'Time Slot' },
  { name: 'TL FullName' },
];

const kindIcons: Record<FieldKind, ReactNode> = {
  calc: (
    <>
      <path d="M3 1h11v15H3z" fill="#252423" />
      <path d="M5 3h7v3H5z" fill="#fff" />
      <path d="M5 8.5h7M5 10.5h7M5 12.5h7" stroke="#fff" strokeDasharray="1.5 1" />
    </>
  ),
  sum: <path d="M14 5V3H4l5 6-5 5h10v-2.500" stroke="#252423" strokeWidth="1.5" />,
  fx: (
    <>
      <path d="M0 1h17v15H0z" fill="#8a8886" />
      <path d="M0 1h17v3H0z" fill="#252423" />
      <path d="M2 5h3v10H2z" fill="#d8d6d4" />
      <path d="M11 5c-3 0-2 10-5 10M7 9h4M11 9l5 6M16 9l-5 6" stroke="#fff" />
    </>
  ),
  tree: (
    <>
      <path d="M2.5 1.5h5v4h-5zM10.5 6.5h5v4h-5zM10.5 12.5h5v4h-5z" fill="#f2c811" stroke="#252423" />
      <path d="M4 9h4M6 7v4M4 15h4M6 13v3" stroke="#252423" />
    </>
  ),
};

function FieldRow({ field, checked, onToggle }: { field: Field; checked: boolean; onToggle: () => void }) {
  const active = field.name === 'Target Mandays';

  return (
    <li className={`flex items-center h-[30px] pl-[9px] rounded-[3px] ${active ? 'bg-[#d2d0ce]' : ''}`}>
      <span className="w-[26px]">
        {field.expand && <Svg w={15} h={9}><path d="M.5 .5l7 7 7-7" stroke="#555" /></Svg>}
      </span>
      <label className="flex items-center">
        <span className="grid">
          <input
            type="checkbox"
            checked={checked}
            onChange={onToggle}
            className="[grid-area:1/1] size-[15px] appearance-none rounded-[2px] border border-[#605e5c] checked:border-[#f2c811] checked:bg-[#f2c811]"
          />
          {checked && (
            <span className="[grid-area:1/1] flex items-center justify-center pointer-events-none">
              <Svg w={9} h={7}><path d="M.5 3.5L3 6l5.500-5.500" stroke="#333" /></Svg>
            </span>
          )}
        </span>
        <span className="w-[32px] pl-1">{field.kind && <Svg w={17} h={17}>{kindIcons[field.kind]}</Svg>}</span>
        <span className="pt-0.5 whitespace-nowrap">{field.name}</span>
      </label>
    </li>
  );
}

function FieldsPane() {
  const [selected, setSelected] = useState<string[]>(['Region Name', 'Target Mandays']);

  const toggle = (name: string) => {
    setSelected(selected.includes(name) ? selected.filter((n) => n !== name) : [...selected, name]);
  };

  return (
    <aside className="flex flex-col w-[223px] shrink-0 bg-[#f3f2f1] border-l border-[#e1dfdd] text-[14px] text-[#252423] overflow-hidden">
      <PaneHeader title="Fields" />
      <div className="flex items-center h-[39px] shrink-0 ml-[5px] mr-0.5 mt-[3px] pl-3.5 gap-2.5 border border-[#c8c6c4] rounded-[3px] bg-white">
        <Svg w={20} h={20}>
          <circle cx="12.5" cy="7.5" r="6.5" stroke="#252423" />
          <path d="M8 12l-7 7" stroke="#252423" strokeWidth="1.5" />
        </Svg>
        <input type="text" aria-label="Search" placeholder="Search" className="w-full min-w-0 bg-transparent outline-none placeholder:text-[#252423]" />
      </div>
      <div className="mt-1 mb-3 border-t border-[#e1dfdd]" />
      <div className="flex flex-1 min-h-0 overflow-hidden">
        <ul className="flex-1 ml-[5px] -mt-[14px]">
          {fields.map((f) => (
            <FieldRow key={f.name} field={f} checked={selected.includes(f.name)} onToggle={() => toggle(f.name)} />
          ))}
        </ul>
        <div className="w-1 h-[206px] mt-[338px] rounded-l-full bg-[#d2d0ce]" />
      </div>
    </aside>
  );
}

/* ---------- Taskbar ---------- */

function OfficeIcon({ letter, dark, mid, light }: { letter: string; dark: string; mid: string; light: string }) {
  return (
    <Svg w={30} h={28}>
      <path d="M8 0h21v28H8z" fill={mid} />
      <path d="M8 0h21v9H8z" fill={light} />
      <path d="M8 19h21v9H8z" fill={dark} />
      <path d="M0 6h16v16H0z" fill={dark} />
      <text x="8" y="18" fontSize="12" fontWeight="700" fill="#fff" textAnchor="middle" fontFamily="Open Sans, sans-serif">{letter}</text>
    </Svg>
  );
}

function TaskButton({ name, className, children }: { name: string; className: string; children?: ReactNode }) {
  return (
    <button type="button" aria-label={name} className={`flex items-center justify-center h-full shrink-0 ${className}`}>
      {children}
    </button>
  );
}

function Taskbar() {
  return (
    <footer className="flex items-center h-[50px] shrink-0 bg-black text-white">
      <TaskButton name="Start" className="w-[60px]">
        <Svg w={20} h={20}>
          <path d="M0 3l8-1v7H0zM9 1.800L20 0v9H9zM0 10h8v8l-8-1zM9 10h11v10L9 18.5z" fill="#fff" />
        </Svg>
      </TaskButton>
      <TaskButton name="File Explorer" className="w-[51px] ml-[9px] border-b-[3px] border-[#76b9ed] pt-[3px]">
        <Svg w={28} h={24}>
          <path d="M0 1h11l2 3h15v18H0z" fill="#ffe08a" />
          <path d="M0 1h11v3H0z" fill="#e8b93a" />
          <path d="M5 13h18v10h-5v-5h-8v5H5z" fill="#39b1e8" />
        </Svg>
      </TaskButton>
      <TaskButton name="BlueStacks" className="w-[71px]">
        <Svg w={28} h={26}>
          <path d="M0 16l14 9 14-9-14-8z" fill="#2f6fd0" />
          <path d="M0 14l14 9 14-9-14-8z" fill="#e23b2e" />
          <path d="M0 11l14 9 14-9-14-8z" fill="#ffd52e" />
          <path d="M1 8l13 9 13-9-12-8z" fill="#86b817" />
        </Svg>
      </TaskButton>
      <TaskButton name="Chrome" className="w-[51px] ml-[188px] bg-[#1c1c1c] border-b-[3px] border-[#4be03c] border-l-4 border-l-[#2a5c26] pt-[3px] pr-1">
        <Svg w={28} h={28}>
          <circle cx="14" cy="14" r="14" fill="#fbc116" />
          <path d="M14 14L2 7a14 14 0 0 1 24 0z" fill="#e33b2e" />
          <path d="M14 14l-1 14A14 14 0 0 1 2 7z" fill="#2ba24c" />
          <circle cx="14" cy="14" r="6.5" fill="#fff" />
          <circle cx="14" cy="14" r="5" fill="#4285f4" />
        </Svg>
      </TaskButton>
      <TaskButton name="Word" className="w-[72px]">
        <OfficeIcon letter="W" dark="#185abd" mid="#2b7cd3" light="#41a5ee" />
      </TaskButton>
      <TaskButton name="Outlook" className="w-[51px] border-b-[3px] border-[#76b9ed] pt-[3px]">
        <OfficeIcon letter="O" dark="#0f6cbd" mid="#28a8ea" light="#1a8ad4" />
      </TaskButton>
      <TaskButton name="Excel" className="w-[51px] ml-[11px] border-b-[3px] border-[#76b9ed] pt-[3px]">
        <OfficeIcon letter="X" dark="#107c41" mid="#21a366" light="#33c481" />
      </TaskButton>
      <TaskButton name="Power BI Desktop" className="w-[61px] ml-1.5 bg-[#373737] border-b-[3px] border-[#76b9ed]" />
      <TaskButton name="Upwork" className="w-[51px] ml-1.5 border-b-[3px] border-[#76b9ed] pt-[3px]">
        <Svg w={30} h={30}>
          <circle cx="15" cy="15" r="15" fill="#6fda44" />
          <text x="15" y="20" fontSize="15" fontWeight="600" fill="#fff" textAnchor="middle" fontFamily="Open Sans, sans-serif">up</text>
        </Svg>
      </TaskButton>
      <TaskButton name="Paint" className="w-[51px] ml-[11px] border-b-[3px] border-[#76b9ed] pt-[3px]">
        <Svg w={30} h={28}>
          <path d="M14 5C5 4 0 12 1 19c1 8 10 9 11 5s4-3 7-3c8 0 9-15-5-16z" fill="#c7dff2" />
          <circle cx="7" cy="13" r="2" fill="#e23b2e" />
          <circle cx="13" cy="9" r="2" fill="#f5a623" />
          <circle cx="6" cy="19" r="2" fill="#2ba24c" />
          <circle cx="13" cy="16" r="1.5" fill="#333" />
          <path d="M16 27l6-17 3 1z" fill="#c9803a" />
          <path d="M22 10l1-9 6 2-4 8z" fill="#e9c9a0" />
        </Svg>
      </TaskButton>
      <div className="flex items-center ml-auto pr-[31px] text-[14px]">
        <button type="button" aria-label="Show hidden icons" className="mr-3"><Svg w={16} h={9}><path d="M1 8l7-7 7 7" stroke="#fff" strokeWidth="1.5" /></Svg></button>
        <Svg w={20} h={14}><path d="M5 13a4 4 0 0 1 0-8 6 6 0 0 1 10-1 4.5 4.5 0 0 1 1 9z" fill="#fff" /></Svg>
        <span className="w-3" />
        <Svg w={18} h={18}>
          <path d="M2 14a14 14 0 0 1 12-12M5.5 15a10 10 0 0 1 9-9M9 16a6 6 0 0 1 6-6" stroke="#ddd" strokeWidth="1.5" />
          <circle cx="14" cy="15" r="2" fill="#fff" />
        </Svg>
        <span className="w-2.5" />
        <Svg w={20} h={16}><path d="M1 5.5h3l4-4v13l-4-4H1zM12 5l5 6M17 5l-5 6" stroke="#fff" strokeWidth="1.5" /></Svg>
        <span className="w-3" />
        <Svg w={16} h={20}>
          <rect x="1" width="14" height="20" rx="7" fill="#0082fc" />
          <path d="M4.5 6.5l7 7L8 16.5v-13l3.500 3-7 7" stroke="#fff" />
        </Svg>
        <span className="w-3" />
        <Svg w={22} h={16}>
          <path d="M5.5 4.5h14v8h-14zM20 7v3" stroke="#fff" strokeWidth="1.5" />
          <path d="M8 7h9v3H8zM0 2h5v4H0zM2 6h2v7H2z" fill="#fff" />
        </Svg>
        <time className="w-[84px] text-center leading-[22px]">
          1:22 PM<br />01/28/20
        </time>
        <button type="button" aria-label="Notifications" className="ml-3.5">
          <Svg w={20} h={20}>
            <path d="M1 1h18v14h-4v4l-4-4H1z" fill="#fff" />
            <path d="M4 5.5h12M4 8.5h12M4 11.5h8" stroke="#000" />
          </Svg>
        </button>
      </div>
    </footer>
  );
}

export default function App() {
  return (
    <div className="flex flex-col h-screen overflow-hidden bg-white font-['Open_Sans',sans-serif]">
      <TitleBar />
      <TabRow />
      <Ribbon />
      <div className="flex flex-1 min-h-0">
        <ViewNav />
        <div className="relative flex flex-1 min-w-0">
          <FormulaBar />
          <Canvas />
          <FiltersPane />
        </div>
        <VisualizationsPane />
        <FieldsPane />
      </div>
      <div className="h-[26px] shrink-0 pl-1.5 bg-[#f3f2f1] text-[13px] leading-7 text-[#444]">PAGE 1 OF 1</div>
      <Taskbar />
    </div>
  );
}
